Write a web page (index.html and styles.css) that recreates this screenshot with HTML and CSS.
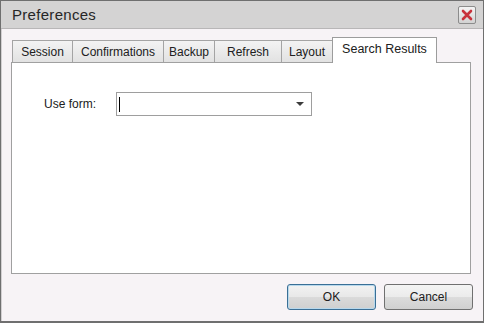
FILE: index.html
```html
<!DOCTYPE html>
<html>
<head>
<meta charset="utf-8">
<title>Preferences</title>
<link rel="stylesheet" href="styles.css">
</head>
<body>
<div class="window">
  <div class="titlebar">
    <span class="title">Preferences</span>
    <span class="close">
      <svg width="12" height="12" viewBox="0 0 12 12"><path d="M2 2 L10 10 M10 2 L2 10" stroke="#c8323c" stroke-width="2.6" stroke-linecap="round"/></svg>
    </span>
  </div>
  <div class="frame">
    <div class="tabs">
      <div class="tab t-session">Session</div>
      <div class="tab t-confirm">Confirmations</div>
      <div class="tab t-backup">Backup</div>
      <div class="tab t-refresh">Refresh</div>
      <div class="tab t-layout">Layout</div>
      <div class="tab t-search active">Search Results</div>
    </div>
    <div class="panel">
      <div class="field">
        <label class="label">Use form:</label>
        <div class="combo">
          <span class="caret"></span>
          <span class="arrow"></span>
        </div>
      </div>
    </div>
    <div class="buttons">
      <button class="btn default">OK</button>
      <button class="btn">Cancel</button>
    </div>
  </div>
</div>
</body>
</html>
```
FILE: styles.css
```css
html, body {
  margin: 0;
  padding: 0;
  background: #f7f3f6;
}
.window {
  width: 484px;
  height: 323px;
  box-sizing: border-box;
  border: 1px solid #6f6f6f;
  border-bottom-width: 2px;
  background: #f7f3f6;
  display: flex;
  flex-direction: column;
  font-family: "Liberation Sans", Arial, sans-serif;
  color: #1e1e1e;
}
.titlebar {
  height: 28px;
  flex: none;
  box-sizing: border-box;
  background: #d4d3d3;
  border-bottom: 1px solid #b8b6b7;
  display: flex;
  align-items: center;
  justify-content: space-between;
  padding: 0 7px 0 11px;
}
.title {
  font-size: 15px;
  letter-spacing: 0.3px;
  color: #262626;
}
.close {
  width: 18px;
  height: 18px;
  box-sizing: border-box;
  border: 1px solid #8c8c8c;
  border-radius: 2px;
  background: linear-gradient(#f4f4f4, #d2d2d2);
  display: flex;
  align-items: center;
  justify-content: center;
}
.frame {
  flex: 1;
  display: flex;
  flex-direction: column;
  padding: 8px 12px 0 9px;
  border-left: 1px solid #d2cfd1;
}
.tabs {
  display: flex;
  height: 25px;
  flex: none;
  align-items: flex-end;
  padding-left: 1px;
  position: relative;
  z-index: 1;
}
.tab {
  height: 22px;
  box-sizing: border-box;
  border: 1px solid #a4a4a4;
  border-bottom: none;
  margin-left: -1px;
  background: linear-gradient(#f3f3f3, #e2e2e2);
  font-size: 12px;
  display: flex;
  align-items: center;
  justify-content: center;
  padding-top: 1px;
  color: #202020;
}
.t-session { width: 61px; margin-left: 0; }
.t-confirm { width: 92px; }
.t-backup { width: 52px; }
.t-refresh { width: 68px; }
.t-layout { width: 52px; }
.tab.active {
  width: 105px;
  height: 26px;
  margin-bottom: -1px;
  background: #ffffff;
  border-color: #9c9c9c;
  font-size: 12.5px;
  padding-top: 0;
  padding-bottom: 3px;
}
.panel {
  height: 212px;
  flex: none;
  box-sizing: border-box;
  border: 1px solid #a0a0a0;
  background: #ffffff;
  padding: 29px 0 0 32px;
}
.field {
  display: flex;
  align-items: center;
}
.label {
  width: 72px;
  font-size: 12px;
  color: #202020;
}
.combo {
  width: 196px;
  height: 24px;
  box-sizing: border-box;
  border: 1px solid #9e9e9e;
  background: #ffffff;
  display: flex;
  align-items: center;
  justify-content: space-between;
  padding: 0 7px 0 2px;
}
.caret {
  width: 1px;
  height: 15px;
  background: #000000;
}
.arrow {
  width: 0;
  height: 0;
  border-left: 4px solid transparent;
  border-right: 4px solid transparent;
  border-top: 4px solid #3c3c3c;
}
.buttons {
  display: flex;
  justify-content: flex-end;
  gap: 8px;
  margin-top: 10px;
  margin-right: -2px;
}
.btn {
  width: 89px;
  height: 26px;
  box-sizing: border-box;
  border: 1px solid #707070;
  border-radius: 3px;
  background: linear-gradient(#f4f4f4 0%, #ebebeb 50%, #dcdcdc 51%, #d0d0d0 100%);
  font-family: "Liberation Sans", Arial, sans-serif;
  font-size: 12px;
  color: #202020;
  padding: 0;
}
.btn.default {
  border-color: #3a6f96;
  box-shadow: inset 0 0 0 1px #b8d8ec;
  background: linear-gradient(#f2f2f2 0%, #e8e8e8 50%, #dadada 51%, #cfcfcf 100%);
}
```
